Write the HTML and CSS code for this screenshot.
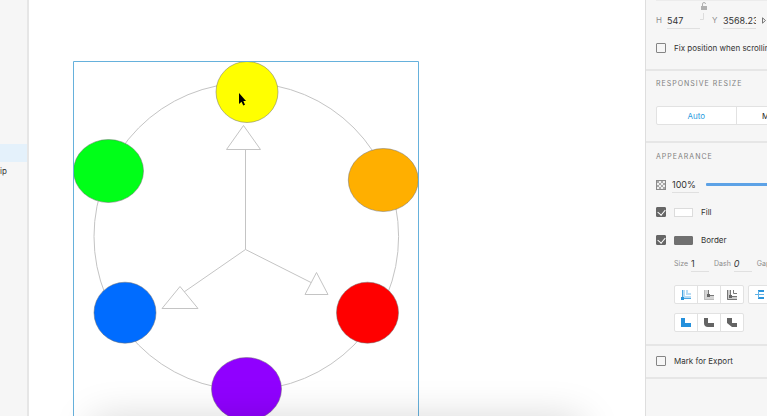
FILE: index.html
```html
<!DOCTYPE html>
<html lang="en">
<head>
<meta charset="utf-8">
<title>Color wheel</title>
<link rel="stylesheet" href="styles.css">
</head>
<body>
<div class="app">
  <aside class="layers" aria-label="Layers">
    <div class="layer selected"></div>
    <div class="layer">ip</div>
  </aside>

  <main class="canvas">
    <svg class="artwork" width="100%" height="100%" role="img" aria-label="Color wheel">
      <g transform="translate(-29 0)">
        <g fill="none" stroke="#c4c4c4">
          <ellipse cx="246.300" cy="236.500" rx="152.300" ry="153.500"/>
          <path d="M245.500 249.500V149.500M245.500 249.500L184 292M245.500 249.500L312 283"/>
          <path fill="#fff" d="M243.500 125.500L260.500 149.500H226.500ZM180 286.500L198 308.500H162ZM316.500 272.500L328 294.500H305Z"/>
        </g>
        <g stroke="#707070" stroke-opacity=".5">
          <ellipse cx="247" cy="92" rx="31" ry="30.500" fill="#ff0"/>
          <ellipse cx="108.500" cy="171" rx="35" ry="31.500" fill="#00ff18"/>
          <ellipse cx="383.300" cy="180" rx="35" ry="31.500" fill="#ffaf00"/>
          <ellipse cx="125" cy="312.700" rx="31" ry="30.500" fill="#006cff"/>
          <ellipse cx="367.500" cy="312.700" rx="31" ry="30.500" fill="#f00"/>
          <ellipse cx="246.500" cy="389" rx="35" ry="31.500" fill="#9000ff"/>
        </g>
        <path d="M73.500 430V61.500H418.500V430" fill="none" stroke="#66b1dc"/>
        <path d="M239 93V104L241.500 101.800L243.300 105.500L245 104.700L243.300 101H246Z" fill="#000"/>
      </g>
    </svg>
    <div class="dock-shadow"></div>
  </main>

  <aside class="inspector" aria-label="Properties">
    <section class="section transform">
      <div class="size-row">
        <label class="tag" for="h">H</label>
        <input class="field" id="h" value="547">
        <svg class="lock" width="12" height="22" viewBox="0 0 12 22" fill="none">
          <rect x="1" y="5" width="6" height="4" fill="#b0b0b0"/>
          <path d="M2.500 5V3Q2.500 1.500 4 1.500Q5.500 1.500 5.500 3" stroke="#b0b0b0"/>
          <path d="M3.500 12V18.500H0" stroke="#dcdcdc"/>
        </svg>
        <label class="tag" for="y">Y</label>
        <input class="field" id="y" value="3568.23">
        <svg class="flip" width="8" height="7" viewBox="0 0 8 7" fill="none" stroke="#777"><path d="M.5 .8V6.200L3.500 3.500ZM5.500 0V7"/></svg>
      </div>
      <label class="check-row"><input type="checkbox" class="check"><span>Fix position when scrolling</span></label>
    </section>

    <section class="section resize">
      <h2 class="heading">RESPONSIVE RESIZE</h2>
      <div class="segments wide">
        <button class="segment active">Auto</button>
        <button class="segment">Manual</button>
      </div>
    </section>

    <section class="section appearance">
      <h2 class="heading">APPEARANCE</h2>
      <div class="opacity-row">
        <svg width="10" height="10" viewBox="0 0 10 10">
          <rect x=".5" y=".5" width="9" height="9" fill="#eee" stroke="#8a8a8a"/>
          <path d="M1 1H3V3H1ZM5 1H7V3H5ZM3 3H5V5H3ZM7 3H9V5H7ZM1 5H3V7H1ZM5 5H7V7H5ZM3 7H5V9H3ZM7 7H9V9H7Z" fill="#a8a8a8"/>
        </svg>
        <input class="field percent" value="100%" aria-label="Opacity">
        <input type="range" class="slider" value="100" aria-label="Opacity slider">
      </div>
      <label class="check-row paint"><input type="checkbox" class="check" checked><span class="swatch"></span><span>Fill</span></label>
      <label class="check-row paint"><input type="checkbox" class="check" checked><span class="swatch dark"></span><span>Border</span></label>
      <div class="stroke-row">
        <label class="mini" for="size">Size</label><input class="field number" id="size" value="1">
        <label class="mini" for="dash">Dash</label><input class="field number zero" id="dash" value="0">
        <label class="mini" for="gap">Gap</label><input class="field number zero" id="gap" value="0">
      </div>
      <div class="icon-row">
        <div class="segments icons">
          <button class="segment" aria-label="Inner stroke"><svg width="12" height="12" viewBox="0 0 12 12" fill="none"><path d="M2 1H5V7H11V10H2Z" fill="#b9dcf4"/><path d="M2.500 1V9.500H11" stroke="#4ba6e2"/><path d="M7 1V5H11" stroke="#b9dcf4" stroke-width="2"/><rect x="1" y="8" width="3" height="3" fill="#2b95dc"/></svg></button>
          <button class="segment" aria-label="Outer stroke"><svg width="12" height="12" viewBox="0 0 12 12" fill="none"><path d="M1 1H5V7H11V11H1Z" fill="#d4d4d4"/><path d="M1.500 1V10.500H11" stroke="#bbb"/><path d="M5.500 1V6.500H11" stroke="#777"/><rect x="4" y="5" width="3" height="3" fill="#666"/></svg></button>
          <button class="segment" aria-label="Center stroke"><svg width="12" height="12" viewBox="0 0 12 12" fill="none"><path d="M1 1H4V8H11V11H1Z" fill="#ccc"/><path d="M1.500 1V10.500H11M4.500 1V7.500H11M7.500 1V4.500H11" stroke="#777"/><rect x="3" y="6" width="3" height="3" fill="#666"/></svg></button>
        </div>
        <div class="segments icons">
          <button class="segment" aria-label="Butt cap"><svg width="12" height="12" viewBox="0 0 12 12" fill="none"><path d="M4 2H10M4 9H10" stroke="#2b95dc" stroke-width="2"/><path d="M4.500 2V9M1 5.500H10" stroke="#63b3e7"/></svg></button>
          <button class="segment" aria-label="Round cap"></button>
          <button class="segment" aria-label="Square cap"></button>
        </div>
      </div>
      <div class="icon-row">
        <div class="segments icons">
          <button class="segment" aria-label="Miter join"><svg width="12" height="12" viewBox="0 0 12 12"><path d="M1 1H5V6H11V10H1Z" fill="#2490dc"/></svg></button>
          <button class="segment" aria-label="Round join"><svg width="12" height="12" viewBox="0 0 12 12"><path d="M1 1H5V6H11V10H5Q1 10 1 6Z" fill="#646464"/></svg></button>
          <button class="segment" aria-label="Bevel join"><svg width="12" height="12" viewBox="0 0 12 12"><path d="M1 1H6V6H11V10H6L1 6Z" fill="#646464"/></svg></button>
        </div>
      </div>
    </section>

    <section class="section export">
      <label class="check-row"><input type="checkbox" class="check"><span>Mark for Export</span></label>
    </section>
  </aside>
</div>
</body>
</html>
```
FILE: styles.css
```css
* { box-sizing: border-box; }

body {
  margin: 0;
  background: #fff;
  color: #333;
  font: 8px/12px Inter, "Liberation Sans", sans-serif;
}

svg { flex: none; }

.app {
  display: flex;
  height: 100vh;
  overflow: hidden;
}

.layers {
  flex: 0 0 29px;
  padding-top: 144px;
  background: #f6f6f6;
  border-right: 2px solid #e6e6e6;
}

.layer {
  height: 18px;
  line-height: 18px;
}

.layer.selected {
  background: #e4f1fb;
}

.canvas {
  position: relative;
  flex: 1;
  min-width: 0;
  overflow: hidden;
}

.artwork { display: block; }

.dock-shadow {
  position: absolute;
  top: 100%;
  left: 64px;
  right: 64px;
  height: 40px;
  box-shadow: 0 4px 40px rgba(0, 0, 0, 0.18);
}

.inspector {
  flex: 0 0 122px;
  overflow: hidden;
  white-space: nowrap;
  background: #f6f6f6;
  border-left: 1px solid #dedede;
}

.section {
  padding-left: 10px;
  border-bottom: 2px solid #e6e6e6;
}

.heading {
  margin: 0;
  font-size: 7px;
  font-weight: 400;
  line-height: 12px;
  letter-spacing: 1px;
  color: #808080;
}

.field {
  flex: none;
  width: 33px;
  height: 17px;
  padding: 0;
  border: 0;
  border-bottom: 1px solid #e0e0e0;
  border-radius: 0;
  background: none;
  color: #333;
  font: inherit;
  font-size: 9px;
}

.size-row {
  display: flex;
  align-items: flex-end;
  height: 29px;
  border-top: 1px solid #ececec;
}

.tag {
  flex: none;
  width: 11px;
  line-height: 17px;
  color: #8c8c8c;
}

.lock { align-self: flex-start; }

.flip { margin: 0 0 5px 6px; }

.check-row {
  display: flex;
  align-items: center;
  gap: 8px;
}

.check {
  appearance: none;
  flex: none;
  width: 10px;
  height: 10px;
  margin: 0;
  border: 1px solid #858585;
  border-radius: 1px;
}

.check:checked {
  border-color: #666;
  background: #666;
}

.check:checked::after {
  content: "";
  display: block;
  width: 4px;
  height: 6px;
  margin: 0 0 0 2px;
  border: solid #fff;
  border-width: 0 1px 1px 0;
  transform: rotate(40deg);
}

.transform { padding-bottom: 15px; }

.transform .check-row { margin-top: 13px; }

.resize { padding-top: 7px; padding-bottom: 16px; }

.segments {
  display: flex;
  flex: none;
  height: 19px;
  border: 1px solid #e2e2e2;
  border-radius: 2px;
  background: #fff;
}

.segments.wide {
  width: 160px;
  margin-top: 16px;
}

.segments.icons { width: 70px; }

.segment {
  display: flex;
  flex: 1;
  align-items: center;
  justify-content: center;
  padding: 0;
  border: 0;
  background: none;
  color: #222;
  font: inherit;
}

.segment + .segment { border-left: 1px solid #e2e2e2; }

.segment.active { color: #2a9be0; }

.appearance { padding-top: 8px; padding-bottom: 12px; }

.opacity-row {
  display: flex;
  align-items: center;
  margin-top: 13px;
}

.percent {
  width: 27px;
  margin-left: 6px;
}

.slider {
  appearance: none;
  flex: none;
  width: 90px;
  height: 3px;
  margin: 0 0 0 7px;
  border-radius: 1px;
  background: #5da2e6;
}

.slider::-webkit-slider-thumb {
  appearance: none;
  width: 10px;
  height: 10px;
  border-radius: 50%;
  background: #fff;
}

.paint { margin-top: 16px; }

.opacity-row + .paint { margin-top: 13px; }

.swatch {
  width: 19px;
  height: 9px;
  border: 1px solid #dcdcdc;
  background: #fff;
}

.swatch.dark {
  border-color: #707070;
  border-radius: 1px;
  background: #707070;
}

.stroke-row {
  display: flex;
  margin-top: 9px;
  padding-left: 18px;
}

.mini {
  margin-right: 3px;
  font-size: 7px;
  line-height: 17px;
  color: #8c8c8c;
}

.number {
  width: 18px;
  margin-right: 5px;
}

.zero { font-style: italic; }

.icon-row {
  display: flex;
  gap: 4px;
  padding-left: 18px;
  margin-top: 9px;
}

.stroke-row + .icon-row { margin-top: 13px; }

.export { padding: 9px 0 10px 10px; }
```
